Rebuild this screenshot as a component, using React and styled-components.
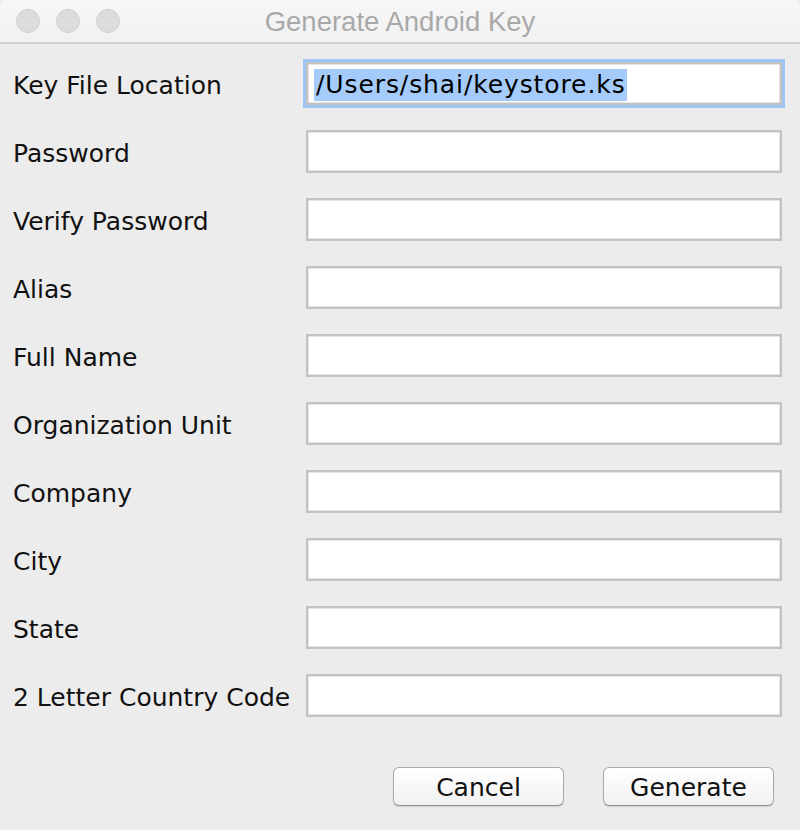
import React from "react";
import styled, { createGlobalStyle } from "styled-components";

const Global = createGlobalStyle`
  html, body { margin: 0; padding: 0; background: #ececec; }
  body { font-family: "DejaVu Sans", "Liberation Sans", sans-serif; }
  * { box-sizing: border-box; }
`;

const Window = styled.div`
  width: 800px;
  height: 830px;
  background: #ececec;
  display: flex;
  flex-direction: column;
  border-top-left-radius: 6px;
  border-top-right-radius: 6px;
  overflow: hidden;
`;

const TitleBar = styled.div`
  height: 44px;
  flex: none;
  background: linear-gradient(#f7f7f7, #f1f1f1);
  border-bottom: 2px solid #d2d2d2;
  display: flex;
  align-items: center;
  position: relative;
  padding-left: 16px;
`;

const Lights = styled.div`
  display: flex;
  gap: 16px;
`;

const Light = styled.span`
  width: 24px;
  height: 24px;
  border-radius: 50%;
  background: #dcdcdc;
  border: 1px solid #d0d0d0;
`;

const Title = styled.div`
  position: absolute;
  left: 0;
  right: 0;
  top: 1px;
  bottom: 0;
  display: flex;
  align-items: center;
  justify-content: center;
  font-family: "Liberation Sans", Arial, sans-serif;
  font-size: 27.5px;
  color: #a9a9a9;
  pointer-events: none;
`;

const Form = styled.div`
  display: grid;
  grid-template-columns: 293px 476px;
  grid-auto-rows: 43px;
  row-gap: 25px;
  padding: 18px 0 0 13px;
  align-items: center;
`;

const Label = styled.div`
  font-size: 25px;
  color: #111;
  white-space: nowrap;
  padding-top: 4px;
`;

const Field = styled.div`
  height: 43px;
  background: #fff;
  border: 2px solid #c3c3c3;
  box-shadow: inset 0 0 0 1px #e4e4e4${(p) => (p.$focused ? ", 0 0 0 3px #9dc4f3" : "")};
  display: flex;
  align-items: center;
  padding: 2px 0 0 6px;
  font-size: 25px;
  color: #000;
`;

const Selected = styled.span`
  background: #a5cbfb;
  line-height: 32px;
  padding: 0 1px 0 2px;
  letter-spacing: 0.9px;
`;

const Buttons = styled.div`
  display: flex;
  justify-content: flex-end;
  gap: 39px;
  padding: 50px 26px 0 0;
`;

const Button = styled.button`
  width: 171px;
  height: 39px;
  border-radius: 6px;
  border: 1px solid #a9a9a9;
  border-bottom-color: #8f8f8f;
  background: linear-gradient(#ffffff, #f1f1f1);
  box-shadow: 0 1px 1px rgba(0, 0, 0, 0.12);
  font-family: "DejaVu Sans", sans-serif;
  font-size: 25px;
  color: #111;
  padding: 2px 0 0;
`;

const rows = [
  "Key File Location",
  "Password",
  "Verify Password",
  "Alias",
  "Full Name",
  "Organization Unit",
  "Company",
  "City",
  "State",
  "2 Letter Country Code",
];

export default function App() {
  return (
    <>
      <Global />
      <Window>
        <TitleBar>
          <Lights>
            <Light />
            <Light />
            <Light />
          </Lights>
          <Title>Generate Android Key</Title>
        </TitleBar>
        <Form>
          {rows.map((r, i) => (
            <React.Fragment key={r}>
              <Label>{r}</Label>
              {i === 0 ? (
                <Field $focused>
                  <Selected>/Users/shai/keystore.ks</Selected>
                </Field>
              ) : (
                <Field />
              )}
            </React.Fragment>
          ))}
        </Form>
        <Buttons>
          <Button>Cancel</Button>
          <Button>Generate</Button>
        </Buttons>
      </Window>
    </>
  );
}
